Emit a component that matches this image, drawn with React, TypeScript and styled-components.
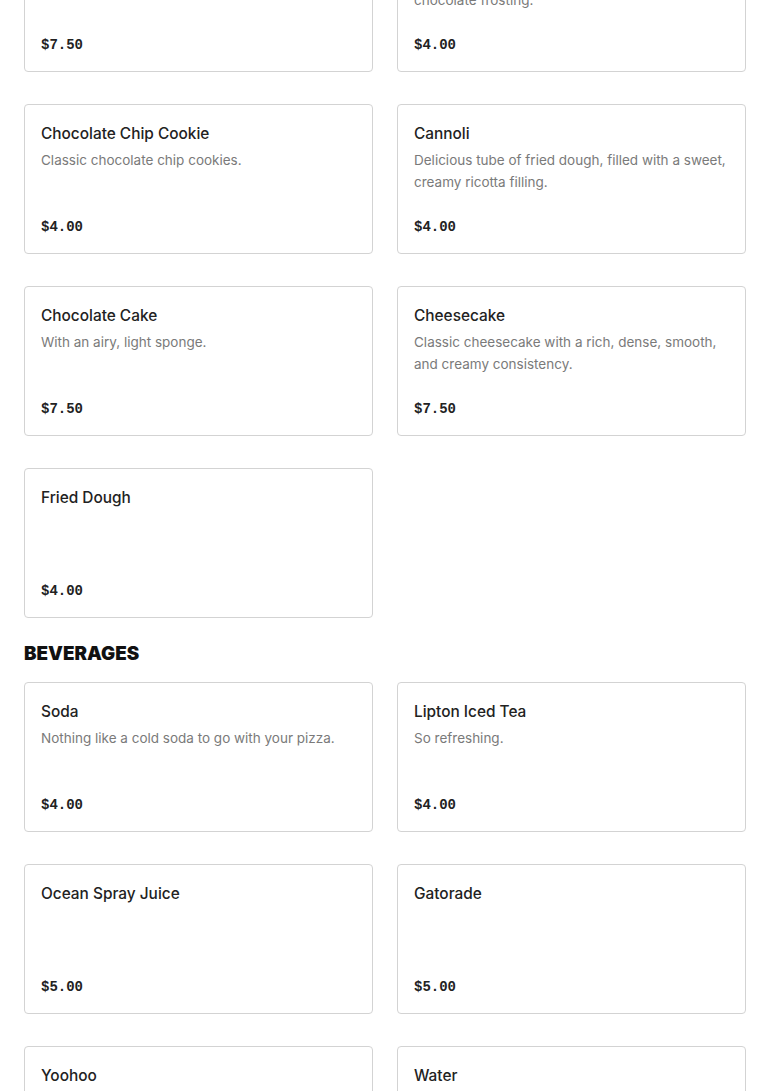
import React from "react";
import styled, { createGlobalStyle } from "styled-components";

const Global = createGlobalStyle`
  html, body { margin: 0; padding: 0; background: #ffffff; }
  body { font-family: Inter, "Liberation Sans", Arial, sans-serif; color: #222222; }
  * { box-sizing: border-box; }
`;

const Page = styled.main`
  padding: 0 24px;
  margin-top: -78px;
`;

const Section = styled.section`
  display: flex;
  flex-direction: column;
`;

const SectionTitle = styled.h2`
  margin: 24px 0 16px;
  font-family: Inter, "Liberation Sans", Arial, sans-serif;
  font-weight: 900;
  font-size: 18.8px;
  line-height: 24px;
  letter-spacing: 0;
  color: #111111;
  text-transform: uppercase;
`;

const Grid = styled.div`
  display: grid;
  grid-template-columns: 1fr 1fr;
  column-gap: 24px;
  row-gap: 32px;
`;

const Card = styled.article`
  height: 150px;
  border: 1px solid #d3d3d3;
  border-radius: 4px;
  padding: 17px 16px 14px;
  display: flex;
  flex-direction: column;
  background: #ffffff;
`;

const Title = styled.h3`
  margin: 0;
  font-size: 15.4px;
  font-weight: 500;
  line-height: 24px;
  color: #222222;
`;

const Desc = styled.p`
  margin: 3px 0 0;
  font-size: 13.5px;
  line-height: 22px;
  color: #7a7a7a;
`;

const Price = styled.div`
  margin-top: auto;
  font-family: "Liberation Mono", "DejaVu Sans Mono", monospace;
  font-weight: 700;
  font-size: 14px;
  line-height: 24px;
  color: #222222;
`;

type Item = { name: string; desc?: string; price: string };

const desserts: Item[] = [
  { name: "Tiramisu", desc: "Coffee-flavored Italian dessert.", price: "$7.50" },
  { name: "Brownie", desc: "Rich, fudgy chocolate brownie topped with chocolate frosting.", price: "$4.00" },
  { name: "Chocolate Chip Cookie", desc: "Classic chocolate chip cookies.", price: "$4.00" },
  { name: "Cannoli", desc: "Delicious tube of fried dough, filled with a sweet, creamy ricotta filling.", price: "$4.00" },
  { name: "Chocolate Cake", desc: "With an airy, light sponge.", price: "$7.50" },
  { name: "Cheesecake", desc: "Classic cheesecake with a rich, dense, smooth, and creamy consistency.", price: "$7.50" },
  { name: "Fried Dough", price: "$4.00" },
];

const beverages: Item[] = [
  { name: "Soda", desc: "Nothing like a cold soda to go with your pizza.", price: "$4.00" },
  { name: "Lipton Iced Tea", desc: "So refreshing.", price: "$4.00" },
  { name: "Ocean Spray Juice", price: "$5.00" },
  { name: "Gatorade", price: "$5.00" },
  { name: "Yoohoo", price: "$3.00" },
  { name: "Water", price: "$3.00" },
];

const MenuCard = ({ item }: { item: Item }) => (
  <Card>
    <Title>{item.name}</Title>
    {item.desc && <Desc>{item.desc}</Desc>}
    <Price>{item.price}</Price>
  </Card>
);

export default function App() {
  return (
    <>
      <Global />
      <Page>
        <Section>
          <Grid>
            {desserts.map((it) => (
              <MenuCard key={it.name} item={it} />
            ))}
          </Grid>
        </Section>
        <Section>
          <SectionTitle>Beverages</SectionTitle>
          <Grid>
            {beverages.map((it) => (
              <MenuCard key={it.name} item={it} />
            ))}
          </Grid>
        </Section>
      </Page>
    </>
  );
}
